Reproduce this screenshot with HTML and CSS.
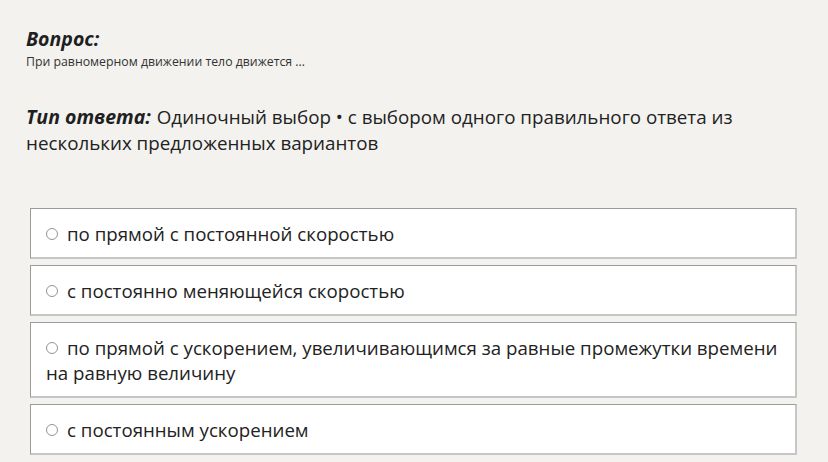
FILE: index.html
```html
<!DOCTYPE html>
<html lang="ru">
<head>
    <meta charset="UTF-8">
    <meta name="viewport" content="width=device-width, initial-scale=1.0">
    <title>Вопрос</title>
    <link rel="stylesheet" href="styles.css">
</head>
<body>
    <!-- Question -->
    <div class="question">
        <h3 class="label">Вопрос:</h3>
        <p class="question-text">При равномерном движении тело движется ...</p>
    </div>

    <!-- Answer type -->
    <p class="answer-type"><span class="label">Тип ответа:</span> Одиночный выбор • с выбором одного правильного ответа из нескольких предложенных вариантов</p>

    <!-- Options -->
    <div class="options">
        <div class="option"><span class="radio"></span>по прямой с постоянной скоростью</div>
        <div class="option"><span class="radio"></span>с постоянно меняющейся скоростью</div>
        <div class="option"><span class="radio"></span>по прямой с ускорением, увеличивающимся за равные промежутки времени на равную величину</div>
        <div class="option"><span class="radio"></span>с постоянным ускорением</div>
    </div>
</body>
</html>
```
FILE: styles.css
```css
body {
    background-color: #f3f2ef;
    color: #222222;
    font-family: "Open Sans", "Noto Sans", sans-serif;
    margin: 0;
    padding: 28px 31px 0 26px;
}

.label {
    font-weight: bold;
    font-style: italic;
    font-size: 19.5px;
    margin: 0;
    color: #1f1f1f;
}

.question h3 {
    line-height: 22px;
}

.question-text {
    font-size: 12.3px;
    margin: 3px 0 0;
    color: #333333;
}

.answer-type {
    font-size: 18.8px;
    line-height: 26px;
    margin: 34px 0 0;
    padding-right: 40px;
}

.answer-type .label {
    margin-right: 1px;
}

.options {
    display: flex;
    flex-direction: column;
    gap: 6px;
    margin: 52px 0 0 4px;
}

.option {
    background-color: #ffffff;
    border-top: 1px solid #9b9b9b;
    border-left: 1px solid #9b9b9b;
    border-right: 2px solid #c6c6c6;
    border-bottom: 2px solid #c6c6c6;
    padding: 12px 14px 11px 15px;
    font-size: 18.7px;
    line-height: 25px;
}

.radio {
    display: inline-block;
    width: 10px;
    height: 10px;
    border: 1px solid #939393;
    border-radius: 50%;
    margin-right: 9px;
    vertical-align: 1px;
}
```
